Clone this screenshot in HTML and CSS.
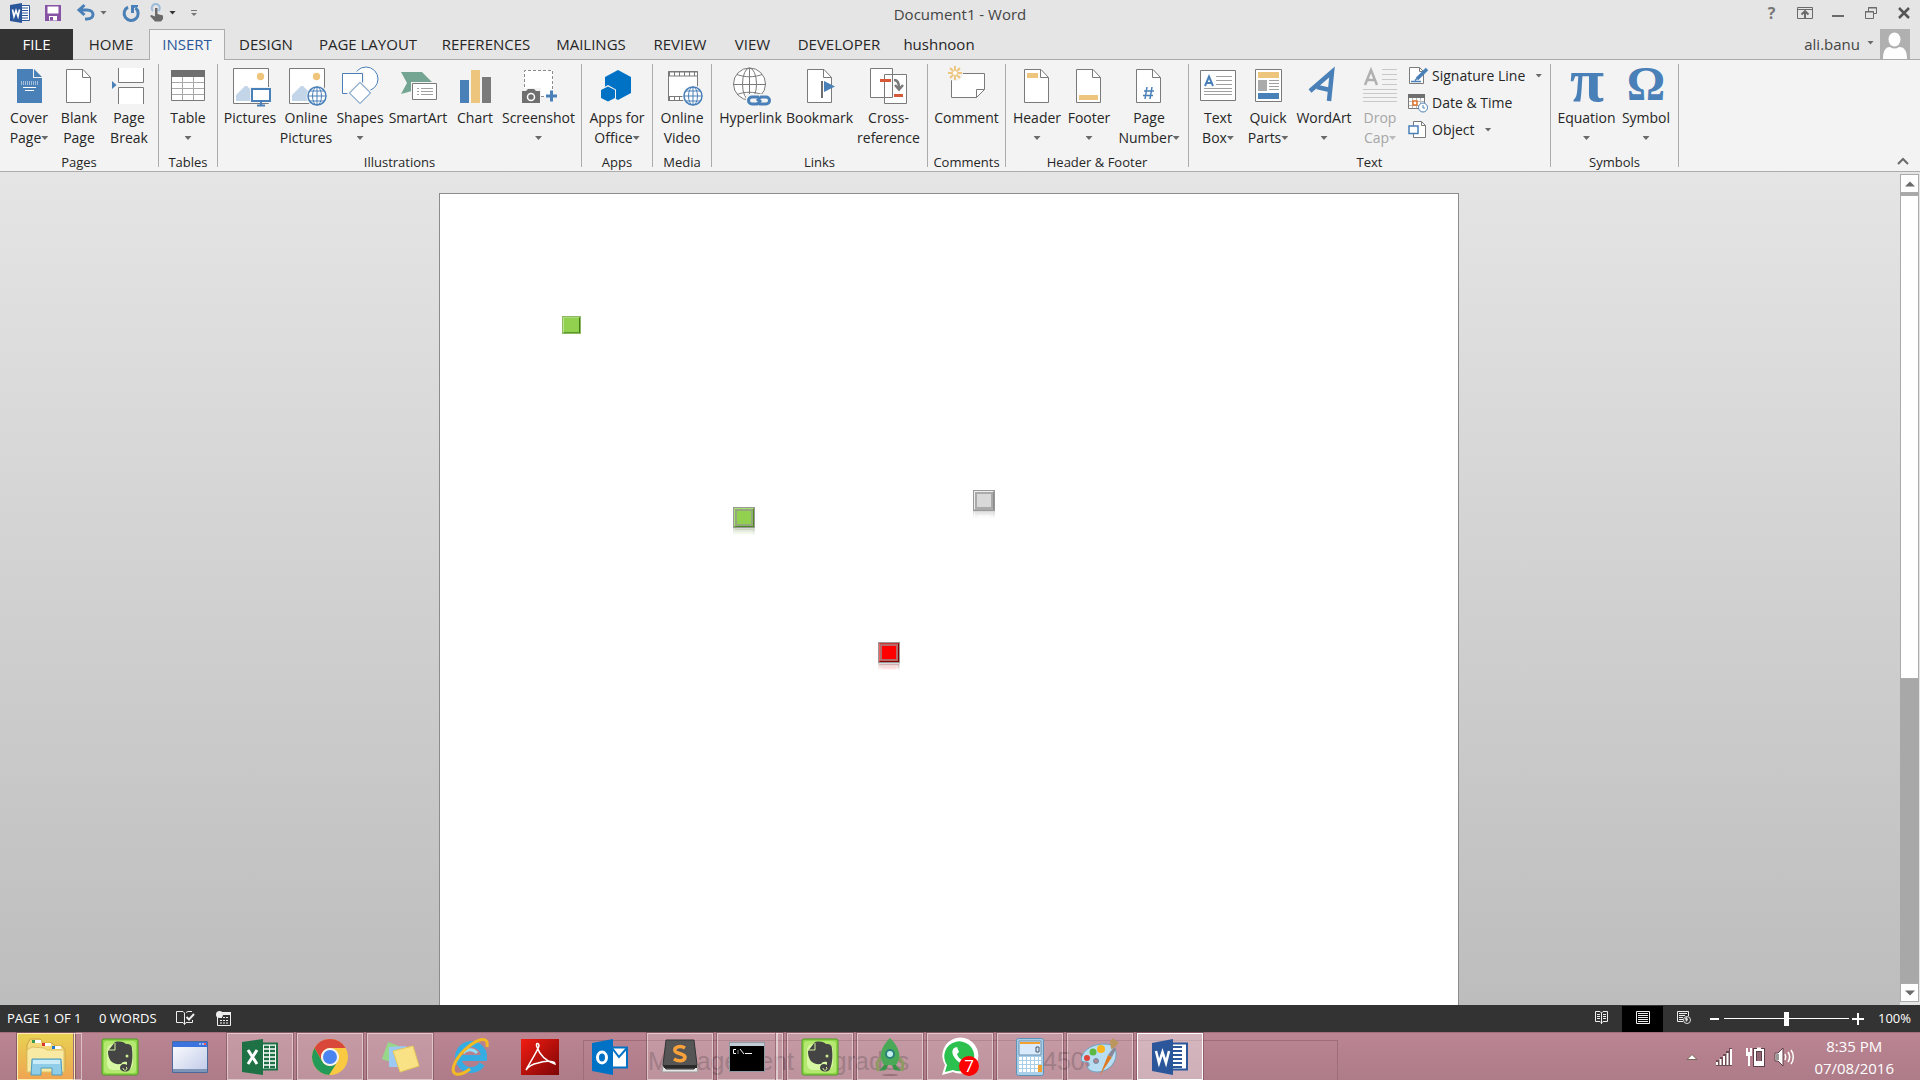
FILE: index.html
```html
<!DOCTYPE html>
<html lang="en">
<head>
<meta charset="utf-8">
<title>Document1 - Word</title>
<link rel="stylesheet" href="styles.css">
</head>
<body>
<svg class="defs" aria-hidden="true">
  <symbol id="page" viewBox="0 0 40 40"><path d="M7.500 3.500h16.500l7.500 8v25h-24z" fill="#fff" stroke="#7a7a7a"/><path d="M23.500 3.500v8h8" fill="none" stroke="#7a7a7a"/></symbol>
  <symbol id="globe" viewBox="0 0 20 20"><circle cx="10" cy="10" r="9" fill="#fff" stroke="#4a80b8" stroke-width="1.500"/><ellipse cx="10" cy="10" rx="4.500" ry="9" fill="none" stroke="#4a80b8"/><path d="M10 1v18M1 10h18M3 5h14M3 15h14" stroke="#4a80b8" fill="none"/></symbol>
  <symbol id="evernote" viewBox="0 0 38 38"><rect x="1" y="1" width="36" height="36" rx="2" fill="#8fd548" stroke="#4f9a22"/><rect x="3" y="3" width="32" height="32" rx="3" fill="#b4e870"/><rect x="6" y="6" width="26" height="26" rx="6" fill="#d8f7a2"/><path d="M7 13l7-9c6-1 9 0 11 2 5 0 6 2 6 5 1 8 0 16-2 20-2 4-10 3-10-1 0-4 4-5 7-3v-3c-4-1-5 1-6 2-8 1-13-3-13-13z" fill="#444"/><path d="M7 12h7V5M22 30c0 3 4 3 4 0l-1-1" fill="none" stroke="#d5f19b"/><circle cx="26" cy="18" r="1.500" fill="#cdeb90"/></symbol>
</svg>
<header class="title-bar">
  <div class="quick-access">
    <svg class="qa-word" width="20" height="20" viewBox="0 0 20 20"><path d="M11 2.500h8.500v15H11z" fill="#fff" stroke="#2b579a"/><path d="M12 5h6M12 7.500h6M12 10h6M12 12.500h6M12 15h6" stroke="#2b579a"/><path d="M0 2l12-2v20L0 18z" fill="#2b579a"/><path d="M2.500 6.500l1.500 7 2-6 2 6 1.500-7" fill="none" stroke="#fff" stroke-width="1.600"/></svg>
    <button class="qa-save" aria-label="Save"><svg width="16" height="16" viewBox="0 0 16 16"><path d="M0 0h16v16H0z" fill="#8653a5"/><path d="M2.500 1.500h11v7h-11zM4 11h8v4.500H4z" fill="#fff"/><path d="M5 12h3v3.500H5z" fill="#8653a5"/></svg></button>
    <button class="qa-undo" aria-label="Undo"><svg width="18" height="16" viewBox="0 0 18 16"><path d="M2 5h8c8 0 8 9 0 9H8M7.500 0L2 5l5.500 5" fill="none" stroke="#4a80b8" stroke-width="3"/></svg><i class="caret"></i></button>
    <button class="qa-redo" aria-label="Repeat"><svg width="18" height="18" viewBox="0 0 18 18"><path d="M13.500 4A7 7 0 1 1 6 3.200" fill="none" stroke="#4a80b8" stroke-width="3"/><path d="M9 1h7v2l-4 1v5H9z" fill="#4a80b8"/></svg></button>
    <button class="qa-touch" aria-label="Touch mode"><svg width="14" height="18" viewBox="0 0 14 18"><path d="M3 7a4 4 0 1 1 5.500 0" fill="none" stroke="#9dbbdb" stroke-width="2"/><path d="M5 4h2.500v6l5.500 1.500V15l-2 2.500H5L0 12l1.500-1L5 12.500z" fill="#6a6a6a"/></svg><i class="caret dark"></i></button>
    <button class="qa-more" aria-label="Customize toolbar"><svg width="6" height="6" viewBox="0 0 6 6"><path d="M0 .5h6" stroke="#777"/><path d="M0 3h6L3 6z" fill="#777"/></svg></button>
  </div>
  <h1 class="doc-title">Document1 - Word</h1>
  <div class="window-controls">
    <button class="help" aria-label="Help">?</button>
    <button aria-label="Ribbon display options"><svg width="16" height="12" viewBox="0 0 16 12"><path d="M.5.500h15v11H.5zM.5 2.500h15" fill="none" stroke="#6a6a6a"/><path d="M8 11V4.500M4.500 7.500L8 4.200l3.500 3.300" fill="none" stroke="#6a6a6a" stroke-width="2"/></svg></button>
    <button aria-label="Minimize"><svg width="12" height="12" viewBox="0 0 12 12"><path d="M0 9h12" stroke="#6a6a6a" stroke-width="2"/></svg></button>
    <button aria-label="Restore"><svg width="12" height="12" viewBox="0 0 12 12"><path d="M3.500 4V.5h8v6H9M3 1h9M.5 4.500h8v7h-8zM0 5h9" fill="none" stroke="#6a6a6a"/></svg></button>
    <button aria-label="Close"><svg width="12" height="12" viewBox="0 0 12 12"><path d="M1 1l10 10M11 1L1 11" stroke="#555" stroke-width="2.500"/></svg></button>
  </div>
</header>
<nav class="tab-bar">
  <button class="tab file w73">FILE</button><button class="tab w76">HOME</button><button class="tab w76 active">INSERT</button><button class="tab w82">DESIGN</button><button class="tab w122">PAGE LAYOUT</button><button class="tab w114">REFERENCES</button><button class="tab w96">MAILINGS</button><button class="tab w82">REVIEW</button><button class="tab w63">VIEW</button><button class="tab w110">DEVELOPER</button><button class="tab w90">hushnoon</button>
  <button class="account">ali.banu<i class="caret"></i><svg width="30" height="30" viewBox="0 0 30 30"><path d="M0 0h30v30H0z" fill="#b0b0b0"/><ellipse cx="14.500" cy="10.500" rx="6" ry="7" fill="#fff"/><path d="M3 30c0-9 3-12 7-12 3 2 6 2 9 0 5 0 8 3 8 12z" fill="#fff"/></svg></button>
</nav>
<section class="ribbon" aria-label="Insert">
  <div class="group"><div class="tools">
    <button class="tool w50"><svg viewBox="0 0 40 40"><path d="M8 3h16v9h9v25H8z" fill="#4a80b8"/><path d="M25 3l8 8h-8z" fill="#4a80b8"/><path d="M12 16h17M12 18h17" stroke="#fff" stroke-dasharray="1 1"/><path d="M14 21.500h13M16 24.500h9" stroke="#fff"/></svg><span>Cover</span><span>Page<i class="caret"></i></span></button>
    <button class="tool w50"><svg><use href="#page"/></svg><span>Blank</span><span>Page</span></button>
    <button class="tool w50"><svg viewBox="0 0 40 40"><path d="M9 2h26v14H9zM9 21h26v17H9z" fill="#fff"/><path d="M9.500 2v14.500h25V2M9.500 38V21.500h25V38" fill="none" stroke="#7a7a7a"/><path d="M3 15l4.500 4L3 23z" fill="#4a80b8"/></svg><span>Page</span><span>Break</span></button>
  </div><div class="group-name">Pages</div></div>
  <div class="group"><div class="tools">
    <button class="tool w50"><svg viewBox="0 0 40 40"><path d="M3.500 4.500h33v30h-33z" fill="#fff" stroke="#7a7a7a"/><path d="M3 4h34v7H3z" fill="#6f6f6f"/><path d="M4 16.500h32M4 22.500h32M4 28.500h32M14.500 11v23M25.500 11v23" stroke="#a8a8a8"/></svg><span>Table</span><span><i class="caret"></i></span></button>
  </div><div class="group-name">Tables</div></div>
  <div class="group"><div class="tools">
    <button class="tool w56"><svg viewBox="0 0 40 40"><path d="M3.500 2.500h35v35h-35z" fill="#fff" stroke="#7a7a7a"/><circle cx="30.500" cy="10.500" r="3.700" fill="#edc57c"/><path d="M6 35v-6l9-9h2l7 7v8z" fill="#c3d5e9"/><path d="M20 21h22v16H20z" fill="#f3f3f3"/><path d="M22 23h18v12H22z" fill="#fff" stroke="#4a80b8" stroke-width="2"/><path d="M31 36v3M27 39.500h8" stroke="#4a80b8" stroke-width="2"/></svg><span>Pictures</span></button>
    <button class="tool w56"><svg viewBox="0 0 40 40"><path d="M3.500 2.500h35v35h-35z" fill="#fff" stroke="#7a7a7a"/><circle cx="30.500" cy="10.500" r="3.700" fill="#edc57c"/><path d="M6 35v-6l9-9h2l7 7v8z" fill="#c3d5e9"/><circle cx="31.500" cy="30.500" r="11" fill="#f3f3f3"/><use href="#globe" x="21" y="20" width="20" height="20"/></svg><span>Online</span><span>Pictures</span></button>
    <button class="tool w52"><svg viewBox="0 0 40 40"><circle cx="26" cy="13" r="12" fill="#fff" stroke="#4a80b8"/><path d="M2.500 7.500h20v20h-20z" fill="#fff" stroke="#f3f3f3" stroke-width="4"/><path d="M2.500 7.500h20v20h-20z" fill="#fff" stroke="#4a80b8"/><path d="M20 16l11 11-11 11L9 27z" fill="#fff" stroke="#f3f3f3" stroke-width="3"/><path d="M20 16.500l10.500 10.500L20 37.500 9.500 27z" fill="#fff" stroke="#4a80b8"/></svg><span>Shapes</span><span><i class="caret"></i></span></button>
    <button class="tool w64"><svg viewBox="0 0 40 40"><path d="M3 6h21l11 11H14v8l-11 3 6-11z" fill="#74a592"/><path d="M13 16h27v19H13z" fill="#f3f3f3"/><path d="M14.500 17.500h24v16h-24z" fill="#fff" stroke="#7a7a7a"/><path d="M19 22.500h2M19 25.500h2M19 28.500h2M23 22.500h12M23 25.500h12M23 28.500h12" stroke="#a0a0a0"/></svg><span>SmartArt</span></button>
    <button class="tool w50"><svg viewBox="0 0 40 40"><path d="M5 14h9v23H5z" fill="#4a80b8"/><path d="M16 4h9v33h-9z" fill="#edc57c"/><path d="M27 11h9v26h-9z" fill="#7a7a7a"/></svg><span>Chart</span></button>
    <button class="tool w77"><svg viewBox="0 0 40 40"><path d="M5 4h29v27H5z" fill="#fff"/><path d="M5.500 31V4.500h28V26M22 30.500h6" fill="none" stroke="#8a8a8a" stroke-dasharray="3 2"/><path d="M2 22h20v16H2z" fill="#f3f3f3"/><path d="M3 25h4l2-2h6l2 2h4v12H3z" fill="#6f6f6f"/><circle cx="12" cy="31" r="3.500" fill="none" stroke="#fff" stroke-width="1.500"/><path d="M27 30h11M32.500 24.500v11" stroke="#4a80b8" stroke-width="3"/></svg><span>Screenshot</span><span><i class="caret"></i></span></button>
  </div><div class="group-name">Illustrations</div></div>
  <div class="group"><div class="tools">
    <button class="tool w62"><svg viewBox="0 0 40 40"><path d="M21 4l13 7v16l-13 7-13-7V11z" fill="#0072c6"/><path d="M11 19l8 4.500v9L11 37l-8-4.500v-9z" fill="#f3f3f3"/><path d="M11 20.500l7 3.500v8l-7 3.500L4 32v-8z" fill="#0072c6"/></svg><span>Apps for</span><span>Office<i class="caret"></i></span></button>
  </div><div class="group-name">Apps</div></div>
  <div class="group"><div class="tools">
    <button class="tool w50"><svg viewBox="0 0 40 40"><path d="M6.500 5.500h29v29h-29z" fill="#fff" stroke="#7a7a7a"/><path d="M6 8h30M6 32.500h30" stroke="#7a7a7a" stroke-width="5"/><path d="M8 8h27M8 32.500h27" stroke="#fff" stroke-width="3" stroke-dasharray="4 1"/><circle cx="31.500" cy="30.500" r="11" fill="#f3f3f3"/><use href="#globe" x="21" y="20" width="20" height="20"/></svg><span>Online</span><span>Video</span></button>
  </div><div class="group-name">Media</div></div>
  <div class="group"><div class="tools">
    <button class="tool w69"><svg viewBox="0 0 40 40"><circle cx="18.500" cy="18" r="16" fill="#fff" stroke="#7a7a7a"/><ellipse cx="18.500" cy="18" rx="7" ry="16" fill="none" stroke="#7a7a7a"/><path d="M18.500 2v32M2 18.500h33M6 8.500c8 3 17 3 25 0M6 28.500c8-3 17-3 25 0" fill="none" stroke="#7a7a7a"/><path d="M15 28h26v12H15z" fill="#f3f3f3"/><path d="M28 31h-7a3.500 3.500 0 0 0 0 7h5l4-4M28 38h7a3.500 3.500 0 0 0 0-7h-5l-4 4" fill="none" stroke="#4a80b8" stroke-width="3"/></svg><span>Hyperlink</span></button>
    <button class="tool w69"><svg viewBox="0 0 40 40"><use href="#page"/><path d="M22 15v17" stroke="#6f6f6f" stroke-width="2"/><path d="M24 15l11 5.500L24 26z" fill="#4a80b8"/></svg><span>Bookmark</span></button>
    <button class="tool w69"><svg viewBox="0 0 40 40"><path d="M15.500 8.500h22v29h-22zM1.500 2.500h22v29h-22z" fill="#fff" stroke="#7a7a7a"/><path d="M11 14.500h11M25 29.500h9" stroke="#d65a3a" stroke-width="3"/><path d="M25 14c4 0 5 3 5 8M26 19l4 4.500 4-4.500" fill="none" stroke="#7a7a7a" stroke-width="2.500"/></svg><span>Cross-</span><span>reference</span></button>
  </div><div class="group-name">Links</div></div>
  <div class="group"><div class="tools">
    <button class="tool w69"><svg viewBox="0 0 40 40"><path d="M4.500 7.500h33v16l-8 8h-25z" fill="#fff" stroke="#7a7a7a"/><path d="M29.500 31.500v-8h8" fill="none" stroke="#7a7a7a"/><circle cx="8" cy="7" r="8" fill="#f3f3f3"/><path d="M8 0v4M8 10v4M1 7h4M11 7h4M3 2l3 3M10 9l3 3M13 2l-3 3M6 9l-3 3" stroke="#edc57c" stroke-width="2"/><circle cx="8" cy="7" r="2.500" fill="#fff" stroke="#edc57c"/></svg><span>Comment</span></button>
  </div><div class="group-name">Comments</div></div>
  <div class="group"><div class="tools">
    <button class="tool w54"><svg viewBox="0 0 40 40"><use href="#page"/><path d="M10 7h11v5H10z" fill="#edc57c"/></svg><span>Header</span><span><i class="caret"></i></span></button>
    <button class="tool w50"><svg viewBox="0 0 40 40"><use href="#page"/><path d="M10 29h19v5H10z" fill="#edc57c"/></svg><span>Footer</span><span><i class="caret"></i></span></button>
    <button class="tool w70"><svg viewBox="0 0 40 40"><use href="#page"/><path d="M18 21l-2 12M23 21l-2 12M15 25h10M14 29.500h10" stroke="#4a80b8" stroke-width="1.500"/></svg><span>Page</span><span>Number<i class="caret"></i></span></button>
  </div><div class="group-name">Header &amp; Footer</div></div>
  <div class="group"><div class="tools">
    <button class="tool w50"><svg viewBox="0 0 40 40"><path d="M2.500 4.500h35v30h-35z" fill="#fff" stroke="#7a7a7a"/><path d="M7 20l4-9.500 4 9.500M8.500 17h5" fill="none" stroke="#4a80b8" stroke-width="2"/><path d="M18 10.500h16M18 14.500h16M18 18.500h16M6 22.500h28M6 25.500h28M6 28.500h28" stroke="#a0a0a0"/></svg><span>Text</span><span>Box<i class="caret"></i></span></button>
    <button class="tool w50"><svg viewBox="0 0 40 40"><path d="M7.500 3.500h26v32h-26z" fill="#fff" stroke="#7a7a7a"/><path d="M10 6h21v6H10z" fill="#edc57c"/><path d="M10 14h9v11h-9z" fill="#aaa"/><path d="M21 14.500h10M21 17.500h10M21 20.500h10M21 23.500h10" stroke="#a0a0a0"/><path d="M10 27h21v6H10z" fill="#4a80b8"/></svg><span>Quick</span><span>Parts<i class="caret"></i></span></button>
    <button class="tool w62"><svg viewBox="0 0 40 40"><path d="M6 25L28 6l-3 29M13 21l13 3" fill="none" stroke="#4a80b8" stroke-width="4.500"/></svg><span>WordArt</span><span><i class="caret"></i></span></button>
    <button class="tool w50" disabled><svg viewBox="0 0 40 40"><path d="M5 19l6-15 6 15M7 14h8" fill="none" stroke="#b0b0b0" stroke-width="2.500"/><path d="M22 3.500h15M22 8.500h15M22 13.500h15M22 18.500h15M3 23.500h34M3 27.500h34M3 31.500h34M3 35.500h34" stroke="#c8c8c8"/></svg><span>Drop</span><span>Cap<i class="caret"></i></span></button>
    <div class="small-tools">
      <button class="small-tool"><svg width="20" height="20" viewBox="0 0 20 20"><path d="M1.500 1.500h10l4 4v12h-14z" fill="#fff" stroke="#7a7a7a"/><path d="M11.500 1.500v4h4" fill="none" stroke="#7a7a7a"/><path d="M9 13l10-10" stroke="#4a80b8" stroke-width="3.500"/><path d="M3 15.500h10M7 14.500l2-2" stroke="#4a80b8" stroke-width="1.500"/></svg>Signature Line<i class="caret wide"></i></button>
      <button class="small-tool"><svg width="20" height="20" viewBox="0 0 20 20"><path d="M.5 1.500h16v14H.5z" fill="#fff" stroke="#7a7a7a"/><path d="M0 1h17v4H0z" fill="#6f6f6f"/><path d="M1 8.500h15M1 12.500h15M4.500 5v10M8.500 5v10M12.500 5v10" stroke="#bbb"/><path d="M5 8h4v4H5z" fill="#fff" stroke="#e07428" stroke-width="1.500"/><circle cx="15" cy="14.500" r="4.500" fill="#fff" stroke="#4a80b8"/><path d="M15 12v3h2" fill="none" stroke="#4a80b8"/></svg>Date &amp; Time</button>
      <button class="small-tool"><svg width="20" height="20" viewBox="0 0 20 20"><path d="M5.500 1.500h8l4 4v12h-12z" fill="#fff" stroke="#7a7a7a"/><path d="M13.500 1.500v4h4" fill="none" stroke="#7a7a7a"/><path d="M1 6h9v7.500H1z" fill="#fff" stroke="#4a80b8" stroke-width="1.500"/></svg>Object<i class="caret wide"></i></button>
    </div>
  </div><div class="group-name">Text</div></div>
  <div class="group"><div class="tools">
    <button class="tool w63"><svg viewBox="0 0 40 40"><text x="20" y="35" class="glyph pi">π</text></svg><span>Equation</span><span><i class="caret"></i></span></button>
    <button class="tool w56"><svg viewBox="0 0 40 40"><text x="20" y="34" class="glyph omega">Ω</text></svg><span>Symbol</span><span><i class="caret"></i></span></button>
  </div><div class="group-name">Symbols</div></div>
  <button class="collapse" aria-label="Collapse the ribbon"><svg width="12" height="8" viewBox="0 0 12 8"><path d="M1 7l5-5 5 5" fill="none" stroke="#6a6a6a" stroke-width="2"/></svg></button>
</section>
<main class="workspace">
  <div class="canvas"><div class="sheet">
    <div class="block flat green b1"></div>
    <div class="block green b2"></div>
    <div class="block gray b3"></div>
    <div class="block red b4"></div>
  </div></div>
  <div class="scrollbar">
    <button aria-label="Scroll up"><svg width="10" height="6" viewBox="0 0 10 6"><path d="M0 5.500L5 .5l5 5z" fill="#6a6a6a"/></svg></button>
    <div class="track"><div class="thumb"></div><div class="rest"></div></div>
    <button aria-label="Scroll down"><svg width="10" height="6" viewBox="0 0 10 6"><path d="M0 .5l5 5 5-5z" fill="#6a6a6a"/></svg></button>
  </div>
</main>
<footer class="status-bar">
  <span class="pages">PAGE 1 OF 1</span><span class="words">0 WORDS</span>
  <button class="proof" aria-label="Proofing"><svg width="18" height="15" viewBox="0 0 18 15"><path d="M8.500 13.500V2L7 .5H.5v11H7l1.500 2 1.500-2h6.500V9M10 1.500L12 .5h4" fill="none" stroke="#eee"/><path d="M10.500 6l2.500 2.500L18 3" fill="none" stroke="#eee" stroke-width="2"/></svg></button>
  <button class="macro" aria-label="Record macro"><svg width="15" height="15" viewBox="0 0 15 15"><path d="M1.500 6v8.500h13v-13H6M6 3.500h9" fill="none" stroke="#eee"/><path d="M7 2.500h8" stroke="#eee" stroke-width="3"/><circle cx="3.500" cy="3.500" r="3.500" fill="#eee"/><path d="M4 6.500h9M4 9.500h9M4 12h9" stroke="#eee" stroke-dasharray="2 1"/></svg></button>
  <div class="views">
    <button aria-label="Read mode"><svg width="13" height="13" viewBox="0 0 13 13"><path d="M.5.500H5L6.500 2 8 .5h4.500v10H8L6.500 12 5 10.500H.5zM6.500 2v11M2 3.500h3M2 5.500h3M2 7.500h3M8 3.500h3M8 5.500h3M8 7.500h3" fill="none" stroke="#eee"/></svg></button>
    <button class="current" aria-label="Print layout"><svg width="14" height="13" viewBox="0 0 14 13"><path d="M.5.500h13v12H.5zM2 2.500h10M2 4.500h10M2 6.500h10M2 8.500h10M2 10.500h10" fill="none" stroke="#eee"/></svg></button>
    <button aria-label="Web layout"><svg width="14" height="13" viewBox="0 0 14 13"><path d="M6 10.500H.5V.5h11V5M2 2.500h8M2 4.500h6M2 6.500h4M2 8.500h4" fill="none" stroke="#eee"/><circle cx="10" cy="9" r="3.500" fill="#333" stroke="#ddd"/><path d="M8 7l2-1 1 3-2 2z" fill="#ddd"/></svg></button>
  </div>
  <div class="zoom">
    <button aria-label="Zoom out"><svg width="12" height="12" viewBox="0 0 12 12"><path d="M1 6h9" stroke="#fff" stroke-width="2"/></svg></button>
    <input type="range" min="0" max="100" value="50" aria-label="Zoom">
    <button aria-label="Zoom in"><svg width="12" height="12" viewBox="0 0 12 12"><path d="M0 6h12M6 0v12" stroke="#fff" stroke-width="2"/></svg></button>
    <button class="percent">100%</button>
  </div>
</footer>
<div class="taskbar">
  <div class="ghost" aria-hidden="true"><span>Management Upgrades</span><span>4500</span></div>
  <div class="apps">
    <button class="app explorer stacked" aria-label="File Explorer"><svg width="40" height="40" viewBox="0 0 40 40"><path d="M1 8l3-6h10l3 4h9l3 3h7l3 4v20H1z" fill="#f3d97a" stroke="#c9a544"/><path d="M6 3h9v3H6zM16 6h9v3h-9zM26 9h9v3h-9z" fill="#fff"/><path d="M6 3h3v3H6z" fill="#3a9a4a"/><path d="M16 6h3v3h-3z" fill="#d33"/><path d="M26 9h3v3h-3z" fill="#27c"/><path d="M1 13l5-3 12 1 3 2h17v22H1z" fill="#f8eaa2" stroke="#dcc065"/><path d="M6 22h29l1 16H26v-7H15v7H5z" fill="#8fcde8" stroke="#4e9cc0"/><path d="M7 23h27v4H7z" fill="#c8ebf7"/></svg></button>
    <button class="app" aria-label="Evernote"><svg width="38" height="38"><use href="#evernote"/></svg></button>
    <button class="app" aria-label="Window"><svg width="36" height="32" viewBox="0 0 36 32"><defs><linearGradient id="wg" x2="1" y2="1"><stop stop-color="#fff"/><stop offset="1" stop-color="#bfc9e8"/></linearGradient></defs><path d="M.5.500h35v31H.5z" fill="url(#wg)" stroke="#4a6a9c"/><path d="M1 1h34v5H1z" fill="#3a73dd"/><path d="M27 3h2M30 3h2" stroke="#fff"/><path d="M32 3h2" stroke="#f55" stroke-width="2"/><path d="M1 29.500h34" stroke="#7f95b8" stroke-width="3"/></svg></button>
    <button class="app running" aria-label="Excel"><svg width="36" height="36" viewBox="0 0 36 36"><path d="M20 4.500h15v26H20z" fill="#fff" stroke="#1e7145" stroke-width="2"/><path d="M22 8h5M28 8h5M22 12h5M28 12h5M22 16h5M28 16h5M22 20h5M28 20h5M22 24h5M28 24h5M22 28h5M28 28h5" stroke="#1e7145" stroke-width="2.500"/><path d="M0 3l21-3v36L0 33z" fill="#1e7145"/><path d="M6 11l9 14M15 11L6 25" stroke="#fff" stroke-width="3"/></svg></button>
    <button class="app running" aria-label="Chrome"><svg width="38" height="38" viewBox="0 0 38 38"><circle cx="19" cy="19" r="18" fill="#f9c941"/><path d="M3.400 10A18 18 0 0 1 34.600 10H19a9 9 0 0 0-8 13z" fill="#d8473a"/><path d="M3.400 10A18 18 0 0 0 18 37l9-14a9 9 0 0 1-16 0z" fill="#249a58"/><circle cx="19" cy="19" r="9" fill="#f4f4f4"/><circle cx="19" cy="19" r="7" fill="#4a84f0"/></svg></button>
    <button class="app running" aria-label="Sticky Notes"><svg width="38" height="32" viewBox="0 0 38 32"><path d="M7 1l14 5-6 17L1 18z" fill="#97d78c"/><path d="M8 6l17-1v21H8z" fill="#9cc8f4"/><path d="M12 10l20-5 6 20-19 6z" fill="#f8e285" stroke="#e6c95a"/></svg></button>
    <button class="app" aria-label="Internet Explorer"><svg width="38" height="38" viewBox="0 0 38 38"><path d="M31 26a13 13 0 1 1 2-6H9" fill="none" stroke="#35ade3" stroke-width="6"/><path d="M12 15a9 9 0 0 1 14 0" fill="none" stroke="#92def8" stroke-width="3"/><path d="M5 36c-8-3 2-19 12-27S38-3 36 9M5 36c4 1 10-2 14-5" fill="none" stroke="#f3ba25" stroke-width="3"/></svg></button>
    <button class="app" aria-label="Adobe Reader"><svg width="38" height="36" viewBox="0 0 38 36"><defs><linearGradient id="ag" x2="1" y2="1"><stop stop-color="#f21c12"/><stop offset="1" stop-color="#7d0505"/></linearGradient></defs><path d="M0 0h38v36H0z" fill="url(#ag)"/><path d="M5 31c3-6 11-18 13-24 0-4-4-3-2 1 3 9 9 14 18 17 0-3-9-4-17-1-5 1-10 4-12 7z" fill="none" stroke="#fff" stroke-width="1.500"/></svg></button>
    <button class="app" aria-label="Outlook"><svg width="36" height="36" viewBox="0 0 36 36"><path d="M20 8.500h15v20H20z" fill="#fff" stroke="#0072c6" stroke-width="2"/><path d="M20 9l7 9 8-9" fill="none" stroke="#0072c6" stroke-width="2"/><path d="M0 4l21-4v36L0 32z" fill="#0072c6"/><ellipse cx="10" cy="18.500" rx="4.500" ry="5.500" fill="none" stroke="#fff" stroke-width="3"/></svg></button>
    <button class="app running" aria-label="Sublime Text"><svg width="36" height="36" viewBox="0 0 36 36"><path d="M4 5h28l4 28H0z" fill="#e4e4e4" stroke="#999"/><path d="M4 1h28l3 25-3 4H4l-3-4z" fill="#555" stroke="#333"/><path d="M1 26h34v3H2z" fill="#2a2a2a"/><path d="M23 9c-5-3-11-1-10 3 1 3 9 2 10 6 0 4-6 5-11 2" fill="none" stroke="#f9a23c" stroke-width="3.500"/></svg></button>
    <button class="app running stacked" aria-label="Command Prompt"><svg width="36" height="30" viewBox="0 0 36 30"><path d="M.5.500h35v29H.5z" fill="#000" stroke="#8e9aa4"/><path d="M1 1h34v3H1z" fill="#c3ccd4"/><path d="M7 7.500H4.500v4H7M9 8.500v1M9 10.500v1M11 7l4 5M16 11.500h7" fill="none" stroke="#fff"/></svg></button>
    <button class="app running" aria-label="Evernote notes"><svg width="38" height="38"><use href="#evernote"/></svg></button>
    <button class="app running" aria-label="Rocket"><svg width="30" height="40" viewBox="0 0 30 40"><path d="M6 20l-4 6 1 8M24 20l4 6-1 8" fill="none" stroke="#8d9b62" stroke-width="3"/><path d="M15 1c8 8 13 18 6 27H9C2 19 7 9 15 1z" fill="#49a957"/><circle cx="15" cy="17" r="4" fill="#c6f0ee" stroke="#288078" stroke-width="2"/><path d="M9 28h4l-2 5-7 1zM17 28h4l5 6-7-1z" fill="#3a9448"/><ellipse cx="15" cy="38" rx="8" ry="1" fill="#98707b"/></svg></button>
    <button class="app running" aria-label="WhatsApp, 7 new"><svg width="38" height="38" viewBox="0 0 38 38"><path d="M1 37l3-10A18 18 0 1 1 12 34z" fill="#fff"/><path d="M4 34l2-7A15 15 0 1 1 12 32z" fill="#2cc04f"/><path d="M13 10c-6 6 6 18 14 17l2-5-5-2-3 2c-3-2-4-3-5-6l2-2-2-5z" fill="#fff"/></svg><b class="badge">7</b></button>
    <button class="app running" aria-label="Calculator"><svg width="28" height="38" viewBox="0 0 28 38"><rect x=".5" y=".5" width="27" height="37" rx="2" fill="#a9cfe8" stroke="#5b92b8"/><path d="M3 3h22v14H3z" fill="#d9eafc" stroke="#6d8fae"/><path d="M4 5h20" stroke="#f2a233" stroke-width="2"/><path d="M20 9h3v5h-3z" fill="none" stroke="#456"/><path d="M3 20.500h22M3 24.500h22M3 28.500h22M3 32.500h22" stroke="#fff" stroke-width="3" stroke-dasharray="3 1"/><path d="M22 27h4v7h-4z" fill="#f0a030"/></svg></button>
    <button class="app running" aria-label="Paint"><svg width="40" height="38" viewBox="0 0 40 38"><path d="M2 18C6 8 20 4 31 7c8 4 6 17-2 23-8 6-19 5-22-1 5-2 2-6-4-5-2-1-2-4-1-6z" fill="#b9def2" stroke="#6aa4c6"/><circle cx="7" cy="20" r="3" fill="#e04438"/><circle cx="13" cy="14" r="3.500" fill="#5cb944"/><circle cx="21" cy="11" r="4" fill="#f9b51e"/><circle cx="16" cy="23" r="2.500" fill="#b48490" stroke="#6b8ea8"/><path d="M20 37l8-20 4 2z" fill="#dd7b24"/><path d="M28 17l6-8 2 2-4 8z" fill="#889"/><path d="M30 3l3-3 6 5-5 5-3 1z" fill="#bb965e"/></svg></button>
    <button class="app running focused" aria-label="Word"><svg width="36" height="36" viewBox="0 0 36 36"><path d="M20 4.500h15v26H20z" fill="#fff" stroke="#2b579a" stroke-width="2"/><path d="M21 8h9M21 12h9M21 16h9M21 20h9M21 24h9M21 28h9" stroke="#2b579a" stroke-width="2"/><path d="M0 4l21-4v36L0 32z" fill="#2b579a"/><path d="M4 12l3 12 3.500-11L14 24l3-12" fill="none" stroke="#fff" stroke-width="2.500"/></svg></button>
  </div>
  <div class="tray">
    <button class="tray-more" aria-label="Show hidden icons"><svg width="12" height="6" viewBox="0 0 12 6"><path d="M1 5.500h10L6 .5z" fill="#fff" stroke="#765"/></svg></button>
    <button class="tray-net" aria-label="Network"><svg width="18" height="18" viewBox="0 0 18 18"><path d="M1 12h4V9h3V6h3V3h3V0h3v18H1z" fill="#6f4c56"/><path d="M2 17v-3M5.500 17v-6M9 17V8M12.500 17V5M16 17V1" stroke="#fff" stroke-width="2"/></svg></button>
    <button class="tray-power" aria-label="Battery"><svg width="20" height="20" viewBox="0 0 20 20"><path d="M10 3h8v15h-8z" fill="#946873" stroke="#5e3e48" stroke-width="4"/><path d="M10 3h8v15h-8zM12 1.500h4" fill="none" stroke="#fff" stroke-width="2"/><path d="M11 14h6v3h-6z" fill="#fff"/><path d="M2 1v4M6 1v4M4 9v10" stroke="#fff" stroke-width="2"/><path d="M1 5h6v4H1z" fill="#fff"/></svg></button>
    <button class="tray-sound" aria-label="Volume"><svg width="20" height="20" viewBox="0 0 20 20"><path d="M1 6h3l5-5v18l-5-5H1z" fill="#fff" stroke="#5e3e48"/><path d="M2 7h3v6H2z" fill="#999"/><path d="M11 7c1 2 1 4 0 6M14 5c2 3 2 7 0 10M17 3c3 4 3 10 0 14" fill="none" stroke="#fff" stroke-width="1.500"/></svg></button>
    <button class="clock"><span>8:35 PM</span><span>07/08/2016</span></button>
  </div>
</div>
</body>
</html>
```
FILE: styles.css
```css
* { box-sizing: border-box; }
html, body { height: 100%; }
body {
  margin: 0;
  display: flex;
  flex-direction: column;
  overflow: hidden;
  font: 15px/20px "Open Sans", "Noto Sans", sans-serif;
  color: #333;
  background: #e5e5e5;
}
button {
  margin: 0;
  padding: 0;
  border: 0;
  background: none;
  color: inherit;
  font: inherit;
}
svg { display: block; flex: none; overflow: visible; }
.defs { position: absolute; width: 0; height: 0; }

.caret {
  display: inline-block;
  width: 7px;
  height: 4px;
  margin-left: 5px;
  vertical-align: 3px;
  background: #6a6a6a;
  clip-path: polygon(0 0, 100% 0, 50% 100%);
}
.caret.dark { background: #333; }

/* Title bar */
.title-bar { display: grid; grid-template-columns: 1fr auto 1fr; height: 29px; flex: none; }
.quick-access { display: flex; align-items: center; padding: 0 0 4px 10px; }
.quick-access button { display: flex; align-items: center; height: 24px; }
.qa-save { margin-left: 15px; }
.qa-undo { margin-left: 16px; }
.qa-redo { margin-left: 15px; }
.qa-touch { margin-left: 10px; }
.qa-more { margin-left: 15px; }
.doc-title { margin: 0; padding-top: 4px; font: inherit; color: #444; }
.window-controls { display: flex; justify-content: flex-end; padding-bottom: 4px; }
.window-controls button { display: grid; place-items: center; width: 33px; }
.window-controls .help { font-size: 16px; font-weight: 700; color: #777; }

/* Ribbon tabs */
.tab-bar { display: flex; height: 31px; flex: none; box-shadow: inset 0 -1px #acacac; }
.tab { height: 31px; padding-bottom: 2px; white-space: nowrap; color: #262626; }
.tab.file { background: #333; color: #fff; }
.tab.active { background: #f3f3f3; border: 1px solid #acacac; border-bottom: 0; color: #2b579a; }
.account { display: flex; align-items: center; height: 30px; margin-left: auto; padding-right: 10px; color: #444; }
.account .caret { margin: 0 6px 3px 7px; }

.w50 { width: 50px; }
.w52 { width: 52px; }
.w54 { width: 54px; }
.w56 { width: 56px; }
.w62 { width: 62px; }
.w63 { width: 63px; }
.w64 { width: 64px; }
.w69 { width: 69px; }
.w70 { width: 70px; }
.w73 { width: 73px; }
.w76 { width: 76px; }
.w77 { width: 77px; }
.w82 { width: 82px; }
.w90 { width: 90px; }
.w96 { width: 96px; }
.w110 { width: 110px; }
.w114 { width: 114px; }
.w122 { width: 122px; }

/* Ribbon */
.ribbon {
  display: flex;
  flex: none;
  height: 112px;
  padding: 4px 0;
  background: #f3f3f3;
  border-bottom: 1px solid #acacac;
  font-size: 14px;
}
.group {
  display: flex;
  flex-direction: column;
  padding: 2px 4px 0;
  border-right: 1px solid #acacac;
}
.tools { display: flex; height: 88px; }
.group-name { font-size: 13px; line-height: 18px; text-align: center; color: #262626; margin-bottom: -4px; }
.tool {
  display: flex;
  flex-direction: column;
  align-items: center;
  flex: none;
  color: #262626;
}
.tool svg { width: 40px; height: 40px; margin-bottom: 2px; }
.tool span { line-height: 20px; white-space: nowrap; }
.tool span .caret:only-child { margin-left: 0; }
.tool:disabled { color: #a6a6a6; }
.tool:disabled .caret { background: #bbb; }
.small-tools { display: flex; flex-direction: column; width: 141px; padding-left: 3px; }
.small-tool { display: flex; align-items: center; gap: 4px; height: 27px; padding-bottom: 8px; color: #262626; white-space: nowrap; }
.caret.wide { margin-left: 6px; }
.glyph { fill: #4a80b8; text-anchor: middle; font-family: "Liberation Serif", serif; font-weight: 700; }
.pi { font-size: 62px; }
.omega { font-size: 48px; }
.collapse { align-self: flex-end; margin-left: auto; padding: 0 11px 2px 0; }

/* Document area */
.workspace {
  display: flex;
  flex: 1;
  min-height: 0;
  background: linear-gradient(#e5e5e5, #bdbdbd);
}
.canvas { flex: 1; display: flex; justify-content: center; padding: 21px 2px 0 0; }
.sheet { position: relative; width: 1020px; background: #fff; border: 1px solid #8c8c8c; border-bottom: 0; }
.scrollbar { display: flex; flex-direction: column; width: 20px; padding: 2px 1px 3px 0; background: #e5e5e5; }
.scrollbar button { display: grid; place-items: center; height: 19px; flex: none; background: #fff; border: 1px solid #ababab; }
.track { flex: 1; display: flex; flex-direction: column; padding: 2px 0; background: #a8a8a8; }
.thumb { flex: 8; background: #fff; border: 1px solid #ababab; }
.rest { flex: 5; }

/* Bevelled shapes on the page */
.block {
  position: absolute;
  width: 22px;
  height: 21px;
  border: 1px solid #999;
  -webkit-box-reflect: below 0 linear-gradient(transparent 65%, rgba(0, 0, 0, 0.4));
}
.block::before { content: ""; position: absolute; inset: 0; border: 1px solid; }
.block::after { content: ""; position: absolute; inset: 1px; border: 2px solid rgba(150, 150, 150, 0.7); }
.green { background: #92d050; }
.green::before { border-color: #a9e06c #4f8a1c #4f8a1c #a9e06c; }
.gray { background: #d9d9d9; }
.gray::before { border-color: #eee #8a8a8a #aaa #eee; }
.red { background: #f00; }
.red::before { border-color: #c33 #800 #800 #e66; }
.flat { width: 19px; height: 18px; border-color: #8db962; -webkit-box-reflect: unset; }
.flat::before { border-color: #a9d878 #3f7a14 #5b9a28 #b9e58c; }
.flat::after { display: none; }
.b1 { left: 122px; top: 122px; }
.b2 { left: 293px; top: 313px; }
.b3 { left: 533px; top: 296px; }
.b4 { left: 438px; top: 448px; }

/* Status bar */
.status-bar {
  display: flex;
  align-items: center;
  flex: none;
  height: 27px;
  padding-left: 7px;
  background: #333;
  color: #fff;
  font-size: 13px;
}
.status-bar > span { padding-bottom: 2px; }
.pages { width: 92px; }
.words { width: 77px; }
.proof { width: 40px; }
.views { display: flex; align-self: stretch; margin-left: auto; padding-top: 1px; }
.views button { display: grid; place-items: center; width: 41px; padding-bottom: 3px; }
.views .current { background: #000; }
.zoom { display: flex; align-items: center; gap: 3px; padding-left: 5px; }
.zoom input { width: 125px; height: 14px; margin: 0; appearance: none; background: linear-gradient(#fff, #fff) center / 100% 1px no-repeat; }
.zoom input::-webkit-slider-thumb { appearance: none; width: 5px; height: 14px; background: #fff; }
.zoom .percent { width: 53px; padding: 0 0 2px 2px; }

/* Taskbar */
.taskbar {
  position: relative;
  display: flex;
  justify-content: space-between;
  flex: none;
  height: 48px;
  padding-left: 17px;
  background: linear-gradient(#bb8592, #ae7b88);
  border-top: 1px solid #a06f7b;
}
.ghost {
  position: absolute;
  left: 583px;
  top: 7px;
  width: 755px;
  height: 40px;
  padding: 4px 0 0 64px;
  border: 1px solid #9d6d79;
  border-bottom: 0;
  color: #8c626d;
  font: 25px/32px "Liberation Sans", sans-serif;
  white-space: nowrap;
}
.ghost span + span { position: absolute; left: 459px; }
.apps { position: relative; display: flex; gap: 4px; }
.app { position: relative; display: grid; place-items: center; width: 66px; height: 47px; }
.running {
  background: rgba(255, 255, 255, 0.18);
  border: 1px solid rgba(255, 255, 255, 0.45);
  box-shadow: 0 0 0 1px rgba(90, 50, 60, 0.4);
}
.focused { background: rgba(255, 255, 255, 0.4); border-color: #fff; }
.stacked { padding-right: 7px; }
.explorer {
  width: 58px;
  margin-right: 8px;
  padding: 0;
  background: linear-gradient(#e8d152, #efa552);
  border: 1px solid #fbeeb0;
  box-shadow: 0 0 0 1px rgba(90, 50, 60, 0.5);
}
.stacked::after {
  content: "";
  position: absolute;
  top: -1px;
  bottom: -1px;
  right: 4px;
  width: 2px;
  background: rgba(255, 255, 255, 0.5);
  border-left: 1px solid #9d6d79;
}
.explorer::after { right: -8px; width: 7px; background: none; border: 1px solid rgba(255, 255, 255, 0.5); border-left-color: #9d6d79; }
.badge {
  position: absolute;
  right: 13px;
  bottom: 3px;
  width: 20px;
  height: 20px;
  border-radius: 50%;
  background: #f00;
  color: #fff;
  font: 17px/20px "Open Sans", sans-serif;
}
.tray { display: flex; align-items: center; padding-right: 26px; color: #fff; }
.tray-more { margin-right: 17px; }
.tray-net { margin-right: 12px; }
.tray-power { margin-right: 9px; }
.tray-sound { margin-right: 20px; }
.clock { display: flex; flex-direction: column; align-items: center; line-height: 22px; }
```
